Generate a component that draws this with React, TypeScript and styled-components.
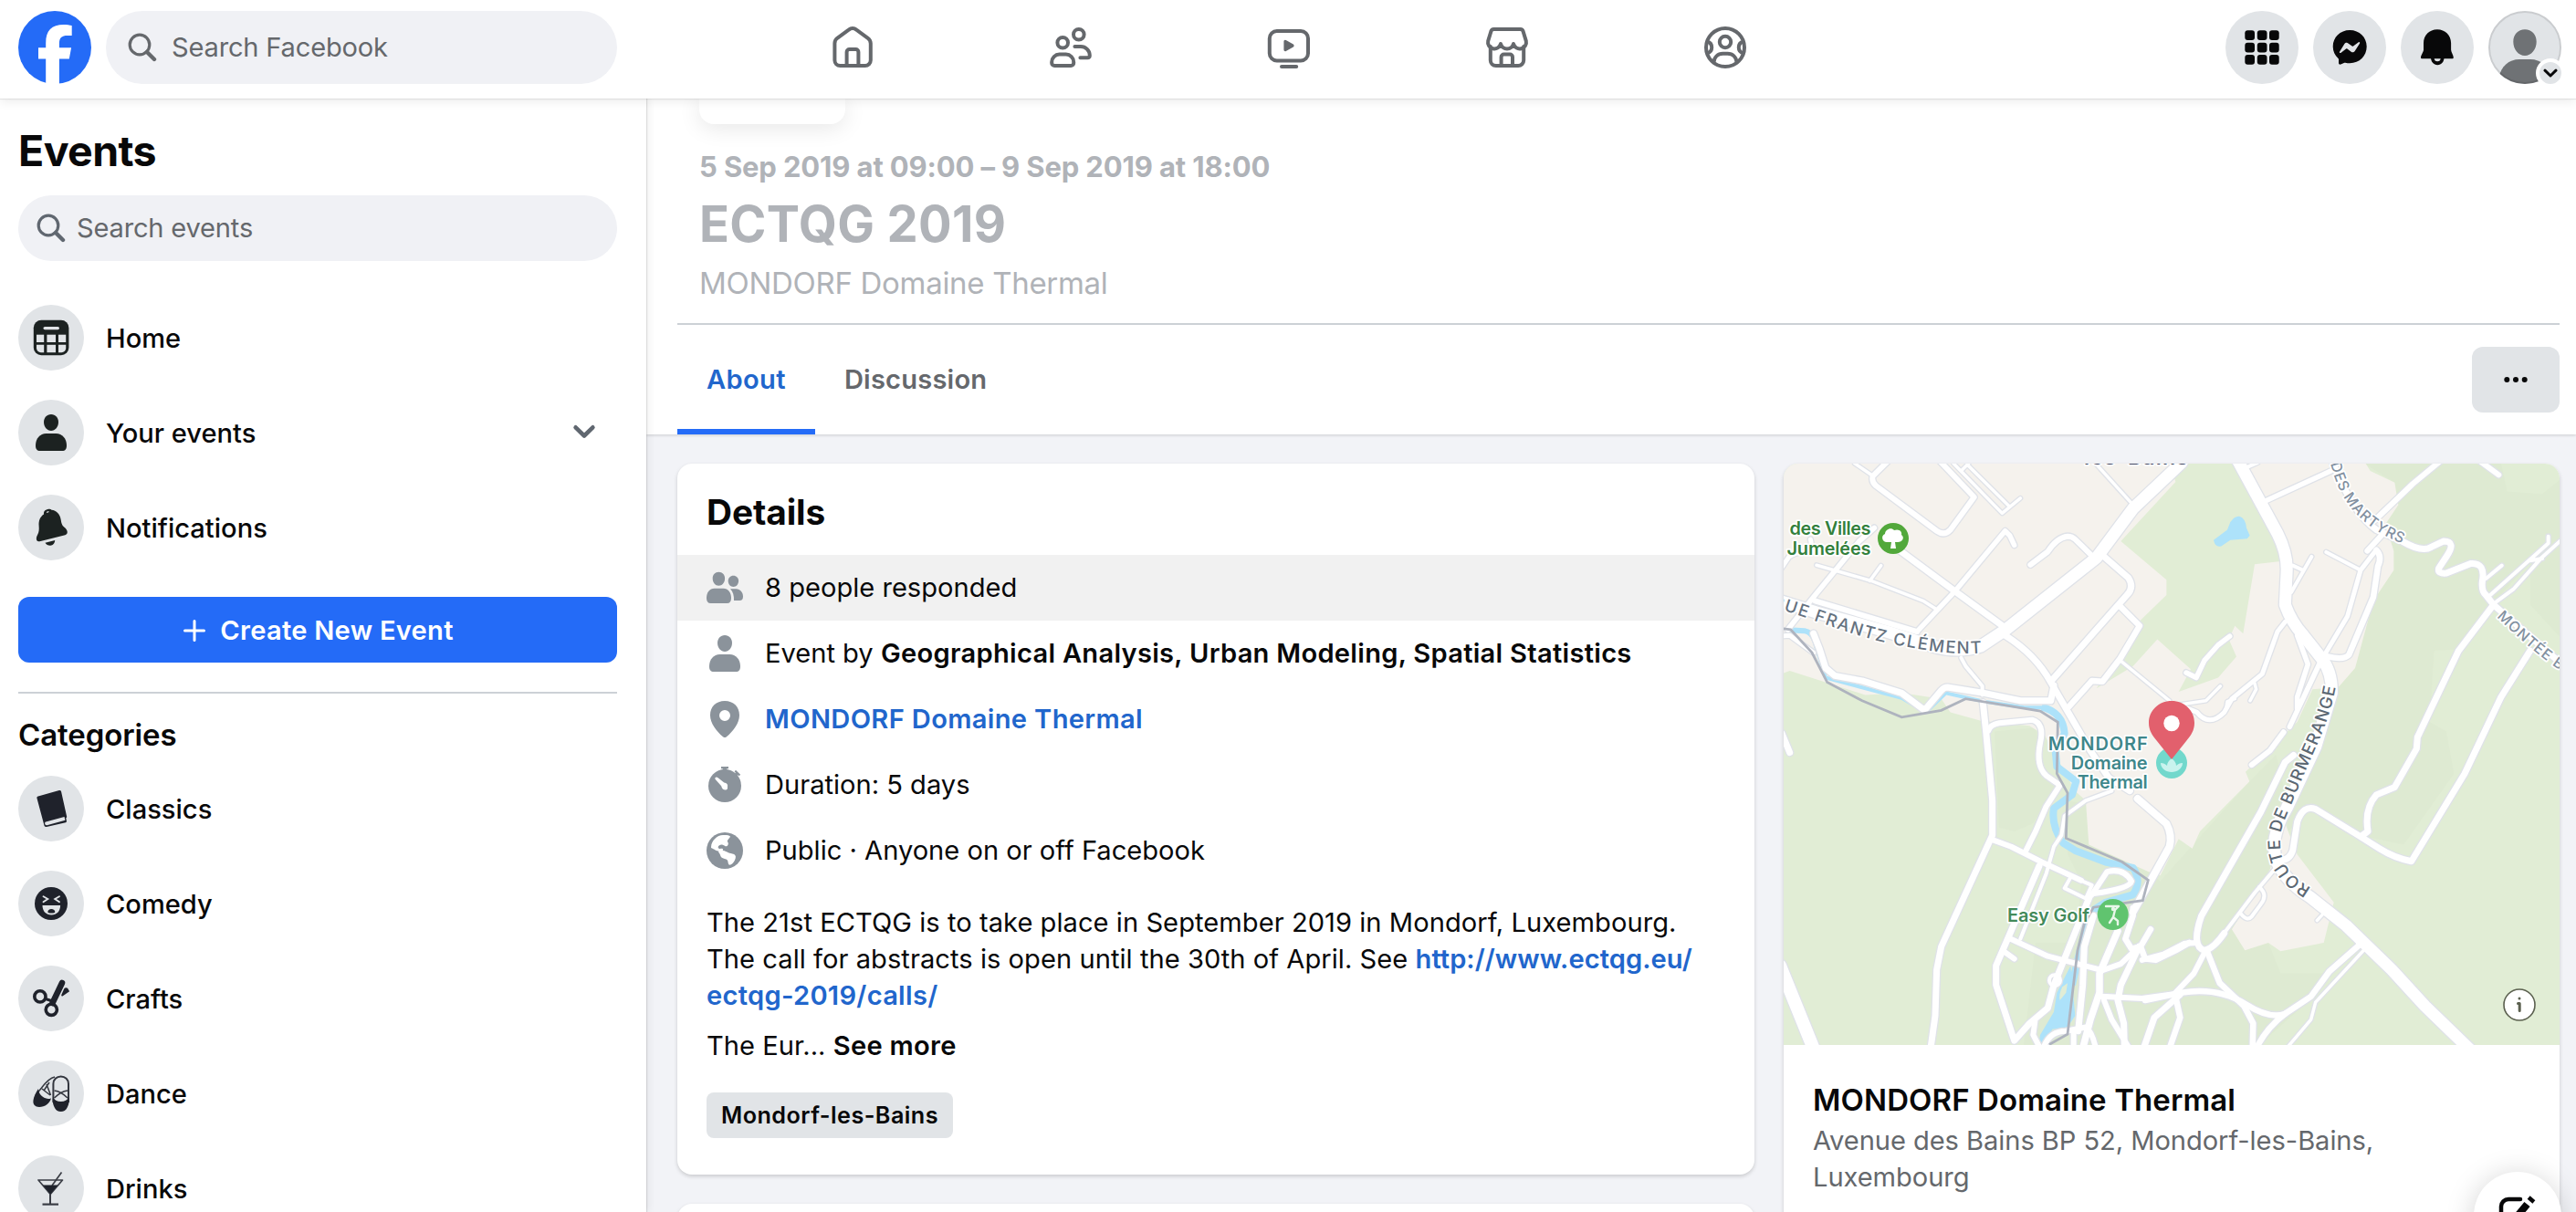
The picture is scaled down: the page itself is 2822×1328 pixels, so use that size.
import React from "react";
import styled, { createGlobalStyle } from "styled-components";

const color = {
  text: "#080809",
  muted: "#65686c",
  faded: "#b0b3b8",
  blue: "#246bf7",
  link: "#2166cc",
  chip: "#e1e4e7",
  field: "#f0f1f5",
  line: "#ccd1d6",
  canvas: "#f2f3f7",
  glyph: "#1c2221",
};

const GlobalStyle = createGlobalStyle`
  * { box-sizing: border-box; }
  body { margin: 0; background: ${color.canvas}; }
  h1, h2, h3, p { margin: 0; }
  svg { display: block; flex: none; }
  button { border: 0; padding: 0; font: inherit; color: inherit; background: none; }
`;

const Page = styled.div`
  position: relative;
  display: flex;
  flex-direction: column;
  width: 2822px;
  height: 1328px;
  overflow: hidden;
  font-family: Inter, "Liberation Sans", sans-serif;
  font-size: 29.1px;
  line-height: 40px;
  color: ${color.text};
`;

/* ---------- top bar ---------- */

const TopBar = styled.header`
  position: relative;
  z-index: 3;
  display: flex;
  align-items: center;
  flex: none;
  height: 108px;
  padding: 0 16px 8px 20px;
  background: #fff;
  box-shadow: 0 1px 1px rgba(0, 0, 0, 0.08), 0 4px 10px rgba(0, 0, 0, 0.07);
`;

const Brand = styled.div`
  display: flex;
  align-items: center;
  gap: 16px;
  width: 794px;
  padding-top: 4px;
`;

const SearchField = styled.div<{ $size: "large" | "small" }>`
  display: flex;
  align-items: center;
  flex: none;
  gap: ${(p) => (p.$size === "large" ? 16 : 12)}px;
  width: ${(p) => (p.$size === "large" ? "560px" : "100%")};
  height: ${(p) => (p.$size === "large" ? 80 : 72)}px;
  padding-left: ${(p) => (p.$size === "large" ? 24 : 20)}px;
  border-radius: 40px;
  background: ${color.field};
  color: ${color.muted};
  letter-spacing: -0.2px;
`;

const MainNav = styled.nav`
  display: grid;
  grid-template-columns: repeat(5, 239px);
  justify-items: center;
  padding-top: 4px;
  color: #65686c;
`;

const Actions = styled.div`
  display: flex;
  flex: 1;
  justify-content: flex-end;
  gap: 16px;
  padding-top: 4px;
`;

const ActionButton = styled.button`
  position: relative;
  width: 80px;
  height: 80px;
  border-radius: 50%;
  background: ${color.chip};
`;

const CaretBadge = styled.span`
  position: absolute;
  right: -4px;
  bottom: -4px;
  display: flex;
  align-items: center;
  justify-content: center;
  width: 32px;
  height: 32px;
  border: 4px solid #fff;
  border-radius: 50%;
  background: ${color.chip};
`;

/* ---------- sidebar ---------- */

const Body = styled.div`
  display: flex;
  flex: 1;
  min-height: 0;
`;

const Sidebar = styled.aside`
  position: relative;
  z-index: 2;
  flex: none;
  width: 708px;
  padding: 29px 32px 0 20px;
  background: #fff;
  box-shadow: 1px 0 1px rgba(0, 0, 0, 0.1), 3px 0 8px rgba(0, 0, 0, 0.06);
`;

const SidebarTitle = styled.h1`
  margin-bottom: 21px;
  font-size: 46.5px;
  line-height: 56px;
  font-weight: 700;
  letter-spacing: -0.6px;
`;

const NavList = styled.div<{ $top: number }>`
  display: flex;
  flex-direction: column;
  gap: 32px;
  margin-top: ${(p) => p.$top}px;
`;

const NavItem = styled.div`
  display: flex;
  align-items: center;
  gap: 24px;
  height: 72px;
  font-weight: 500;
`;

const NavIcon = styled.span`
  flex: none;
  width: 72px;
  height: 72px;
  border-radius: 50%;
  background: ${color.chip};
  color: ${color.glyph};
`;

const NavLabel = styled.span`
  flex: 1;
  padding-top: 2px;
`;

const Caret = styled.svg`
  margin-right: 20px;
`;

const CreateButton = styled.button`
  display: flex;
  align-items: center;
  justify-content: center;
  gap: 14px;
  width: 100%;
  height: 72px;
  margin-top: 40px;
  padding-top: 1px;
  border-radius: 12px;
  background: ${color.blue};
  color: #fff;
  font-weight: 600;
  letter-spacing: 0.27px;
`;

const SidebarRule = styled.hr`
  height: 2px;
  margin: 32px 0 25px;
  border: 0;
  background: ${color.line};
`;

const SidebarHeading = styled.h2`
  font-size: 33px;
  line-height: 40px;
  font-weight: 600;
  letter-spacing: -0.1px;
`;

/* ---------- event header ---------- */

const Main = styled.main`
  display: flex;
  flex-direction: column;
  flex: 1;
  min-width: 0;
`;

const EventHeader = styled.section`
  position: relative;
  z-index: 1;
  flex: none;
  height: 368px;
  padding: 0 18px 0 34px;
  background: #fff;
  box-shadow: 0 1px 3px rgba(0, 0, 0, 0.16);
`;

const Summary = styled.div`
  height: 248px;
  padding-left: 24px;
  border-bottom: 2px solid ${color.line};
  color: ${color.faded};
`;

const DateTile = styled.div`
  width: 160px;
  height: 28px;
  border-radius: 0 0 16px 16px;
  background: #fff;
  box-shadow: 0 4px 24px rgba(0, 0, 0, 0.1);
`;

const EventDate = styled.p`
  margin-top: 27px;
  font-size: 31px;
  font-weight: 700;
  letter-spacing: -0.14px;
`;

const EventName = styled.h2`
  margin-top: 10px;
  font-size: 54.3px;
  line-height: 64px;
  font-weight: 700;
  letter-spacing: 0.35px;
`;

const EventPlace = styled.p`
  margin-top: 13px;
  font-size: 33px;
  letter-spacing: -0.3px;
`;

const TabBar = styled.div`
  display: flex;
  align-items: center;
  height: 120px;
`;

const Tab = styled.button<{ $active?: boolean }>`
  height: 120px;
  padding: ${(p) => (p.$active ? "6px 32px 0" : "0 32px")};
  border-bottom: ${(p) => (p.$active ? `6px solid ${color.blue}` : "0")};
  color: ${(p) => (p.$active ? color.link : color.muted)};
  font-weight: 600;
  letter-spacing: ${(p) => (p.$active ? 0.35 : 0.2)}px;
`;

const MoreButton = styled.button`
  display: flex;
  align-items: center;
  justify-content: center;
  width: 96px;
  height: 72px;
  margin-left: auto;
  border-radius: 12px;
  background: ${color.chip};
`;

/* ---------- cards ---------- */

const Columns = styled.div`
  display: grid;
  grid-template-columns: 1180px 850px;
  gap: 32px;
  align-items: start;
  padding: 32px 18px 0 34px;
`;

const Stack = styled.div`
  display: flex;
  flex-direction: column;
  gap: 32px;
`;

const Card = styled.section`
  overflow: hidden;
  border-radius: 16px;
  background: #fff;
  box-shadow: 0 2px 4px rgba(0, 0, 0, 0.17);
`;

const DetailsCard = styled(Card)`
  height: 779px;
  padding-top: 29px;
`;

const NextCard = styled(Card)`
  height: 200px;
`;

const CardTitle = styled.h2`
  padding: 0 32px;
  margin-bottom: 23px;
  font-size: 38.8px;
  line-height: 48px;
  font-weight: 700;
  letter-spacing: -0.1px;
`;

const Fact = styled.div<{ $hovered?: boolean }>`
  display: flex;
  align-items: center;
  gap: 24px;
  height: 72px;
  padding: 0 32px;
  background: ${(p) => (p.$hovered ? "#f1f1f1" : "transparent")};
`;

const FactIcon = styled.svg`
  color: #8b939b;
`;

const Strong = styled.strong`
  font-weight: 600;
  letter-spacing: 0.28px;
`;

const Link = styled.a<{ $spacing?: number }>`
  color: ${color.link};
  font-weight: 600;
  letter-spacing: ${(p) => p.$spacing ?? 0}px;
`;

const Description = styled.div`
  padding: 23px 32px 0;
`;

const Paragraph = styled.p<{ $top?: number }>`
  margin-top: ${(p) => p.$top ?? 0}px;
  white-space: nowrap;
  letter-spacing: 0.045px;
`;

const Tag = styled.span`
  display: inline-flex;
  align-items: center;
  height: 50px;
  margin-top: 31px;
  padding: 0 16px;
  border-radius: 8px;
  background: ${color.chip};
  font-size: 25.2px;
  font-weight: 600;
  letter-spacing: 0.45px;
`;

const PlaceCard = styled(Card)`
  height: 860px;
`;

const PlaceText = styled.div`
  padding: 40px 32px 0;
`;

const PlaceName = styled.h3`
  font-size: 33px;
  line-height: 40px;
  font-weight: 600;
  letter-spacing: 0.1px;
`;

const PlaceAddress = styled.p`
  width: 640px;
  margin-top: 5px;
  color: ${color.muted};
  letter-spacing: -0.06px;
`;

const ComposeButton = styled.button`
  position: absolute;
  z-index: 4;
  right: 16px;
  bottom: -52px;
  display: flex;
  align-items: center;
  justify-content: center;
  width: 96px;
  height: 96px;
  border-radius: 50%;
  background: #fff;
  box-shadow: 0 4px 32px rgba(0, 0, 0, 0.18);
`;

/* ---------- icons ---------- */

const SearchIcon = ({ tone }: { tone: string }) => (
  <svg width="32" height="32" viewBox="0 0 32 32" fill="none" stroke={tone} strokeLinecap="round">
    <circle cx="13" cy="13" r="10.8" strokeWidth="3.2" />
    <path d="M21 21l8 8" strokeWidth="4.4" />
  </svg>
);

const Logo = () => (
  <svg width="80" height="80" viewBox="0 0 80 80">
    <circle cx="40" cy="40" r="40" fill={color.blue} />
    <path
      fill="#fff"
      d="M30.2 80V52.4h-8.2V40.2h8.2V35c0-13.8 6.2-20.1 19.7-20.1 2.6 0 7 .5 8.8 1v11.2c-1-.1-2.6-.2-4.7-.2-6.6 0-9.1 2.5-9.1 9v4.3h13.2l-2.300 12.200H44.900V80z"
    />
  </svg>
);

const NavGlyph = ({ children }: { children: React.ReactNode }) => (
  <svg width="48" height="48" viewBox="0 0 24 24" fill="none" stroke="currentColor" strokeWidth="2" strokeLinecap="round" strokeLinejoin="round">
    {children}
  </svg>
);

const HomeIcon = () => (
  <NavGlyph>
    <path d="M2.2 9.8a3.7 3.7 0 0 1 1.4-2.9L9.9 2.3a3.3 3.3 0 0 1 4.2 0l6.3 4.6a3.7 3.7 0 0 1 1.500 2.900V19a3 3 0 0 1-3 3H5.200a3 3 0 0 1-3-3z" />
    <path d="M8.8 22v-7.500a1.500 1.500 0 0 1 1.500-1.500h3.400a1.500 1.500 0 0 1 1.500 1.500V22" />
  </NavGlyph>
);

const FriendsIcon = () => (
  <NavGlyph>
    <circle cx="7.600" cy="9.400" r="2.900" />
    <circle cx="16.400" cy="4.900" r="2.900" />
    <path d="M5.800 15.800h3.600a4.200 4.200 0 0 1 4.200 4.200v.5a1.500 1.500 0 0 1-1.500 1.500h-9a1.500 1.500 0 0 1-1.500-1.500V20a4.200 4.200 0 0 1 4.200-4.200z" />
    <path d="M14.200 11.500h3.300a4.900 4.900 0 0 1 4.900 4.900c0 .7-.5 1.200-1.200 1.200h-4" />
  </NavGlyph>
);

const VideoIcon = () => (
  <NavGlyph>
    <rect x="1.400" y="3" width="21.100" height="16.200" rx="4" />
    <path d="M8 22.500h8.100" />
    <path d="M10 8.700v4.600l4-2.300z" fill="currentColor" strokeWidth="1.600" />
  </NavGlyph>
);

const MarketIcon = () => (
  <NavGlyph>
    <path d="M4.800 2h14.400a1.600 1.600 0 0 1 1.600 1.200l1.600 5.200a3.400 3.400 0 0 1-6.900 1.600 3.600 3.600 0 0 1-7 0 3.400 3.400 0 0 1-6.900-1.600l1.600-5.200A1.600 1.600 0 0 1 4.800 2z" />
    <path d="M2.900 11.500V19a3 3 0 0 0 3 3h12.200a3 3 0 0 0 3-3v-7.500" />
    <path d="M8.800 22v-4.700a1.500 1.500 0 0 1 1.500-1.500h3.200a1.500 1.500 0 0 1 1.500 1.500V22" />
  </NavGlyph>
);

const GroupsIcon = () => (
  <NavGlyph>
    <circle cx="12" cy="12" r="10.500" />
    <circle cx="12" cy="9" r="3.100" />
    <path d="M5.700 20.200c.3-3 2.200-4.800 5-4.800h2.600c2.800 0 4.700 1.800 5 4.800" />
    <path d="M2.200 8.900a3.200 3.200 0 0 1 0 6.200M21.800 8.900a3.200 3.200 0 0 0 0 6.200" />
  </NavGlyph>
);

const GridIcon = () => (
  <svg width="80" height="80" viewBox="0 0 80 80" fill={color.text}>
    {[21.3, 34.8, 48].map((y) => [21.3, 34.8, 48].map((x) => <rect key={`${x}-${y}`} x={x} y={y} width="10.700" height="10.700" rx="3" />))}
  </svg>
);

const MessengerIcon = () => (
  <svg width="80" height="80" viewBox="0 0 80 80">
    <path
      fill={color.text}
      d="M40.200 21c-10.600 0-18.500 7.800-18.500 18.100 0 5.300 2.200 9.800 5.800 13 .4.300.5.700.5 1.100v3.800c0 1.200 1.200 2 2.300 1.500l4-1.700c.3-.2.700-.2 1-.1 1.500.4 3.200.6 4.900.6 10.600 0 18.500-7.800 18.500-18.200C58.700 28.800 50.800 21 40.200 21z"
    />
    <path
      fill={color.chip}
      d="M29 44.700l5.400-8.600c.9-1.400 2.800-1.700 4-.7l4.300 3.200c.4.300.9.300 1.300 0l5.800-4.400c.8-.6 1.800.4 1.300 1.200l-5.400 8.600c-.9 1.400-2.800 1.700-4 .7L37.400 41.500c-.4-.3-.9-.3-1.300 0l-5.800 4.400c-.8.6-1.800-.4-1.300-1.200z"
    />
  </svg>
);

const BellIcon = () => (
  <svg width="80" height="80" viewBox="0 0 80 80">
    <path fill={color.text} d="M33 51h14.500c0 4.700-3 8.200-7.200 8.200S33 55.700 33 51z" />
    <path fill={color.chip} d="M36.700 52h7c0 2-1.500 3.300-3.500 3.300S36.700 54 36.700 52z" />
    <path
      fill={color.text}
      d="M40 20.300c-8.700 0-15 6.500-15 15v7.200c0 2.300-3 6.200-3 8.400 0 .8.600 1.300 1.400 1.300h33c.8 0 1.400-.5 1.400-1.300 0-2.200-2.700-6.100-2.700-8.400v-7.200c0-8.500-6.400-15-15.100-15z"
    />
  </svg>
);

const AvatarIcon = () => (
  <svg width="80" height="80" viewBox="0 0 80 80">
    <clipPath id="avatar-clip">
      <circle cx="40" cy="40" r="40" />
    </clipPath>
    <g clipPath="url(#avatar-clip)" fill="#6f7275">
      <path d="M40 20.300c7.500 0 12.700 5.500 12.700 13.400C52.700 42.200 47 49 40 49s-12.700-6.800-12.700-15.300c0-7.900 5.200-13.400 12.700-13.400z" />
      <path d="M12 72c1.500-11 10.500-19 22-19h12c11.500 0 20.500 8 22 19v10H12z" />
    </g>
    <circle cx="40" cy="40" r="39" fill="none" stroke="#000" strokeOpacity="0.100" strokeWidth="2" />
  </svg>
);

const CaretIcon = () => (
  <svg width="24" height="24" viewBox="0 0 24 24" fill="none" stroke={color.text} strokeWidth="3" strokeLinecap="round" strokeLinejoin="round">
    <path d="M6 9.200l6 5.800 6-5.800" />
  </svg>
);

const Glyph72 = ({ children }: { children: React.ReactNode }) => (
  <svg width="72" height="72" viewBox="0 0 72 72" fill="currentColor">
    {children}
  </svg>
);

const CalendarGlyph = () => (
  <Glyph72>
    <rect x="16.800" y="16.800" width="38.600" height="38.400" rx="8.500" />
    <g fill={color.chip}>
      <rect x="27.500" y="24" width="17.500" height="3.200" rx="1.600" />
      <rect x="20" y="32.700" width="8.200" height="8.300" />
      <rect x="31.400" y="32.700" width="9.600" height="8.300" />
      <rect x="44" y="32.700" width="8.200" height="8.300" />
      <path d="M20 43.800h8.200v8.400h-3.400a4.800 4.800 0 0 1-4.800-4.800z" />
      <rect x="31.400" y="43.800" width="9.600" height="8.400" />
      <path d="M44 43.800h8.200v3.600a4.800 4.800 0 0 1-4.800 4.800H44z" />
    </g>
  </Glyph72>
);

const PersonGlyph = () => (
  <Glyph72>
    <path d="M36 16c4.800 0 8 3.700 8 8.600C44 30 40.500 34 36 34s-8-4-8-9.400c0-4.900 3.200-8.600 8-8.600z" />
    <path d="M30.500 37h11C48 37 53 42.500 53 50c0 4-1.500 6-5 6H24c-3.500 0-5-2-5-6 0-7.500 5-13 11.500-13z" />
  </Glyph72>
);

const TiltedBellGlyph = () => (
  <Glyph72>
    <path d="M31.500 16.200c-2.800.6-4 2.900-3.500 5.400-4.200 2.700-5.800 7.400-5.400 12.500.3 4.300.2 7-1.500 10-1.600 2.600-1.500 5.400-.5 6.500.8.900 2.300.7 3.800.3l27-6.700c2-.5 2.500-1.900 2.300-3.600-.3-2.400-1.800-3.900-3.500-5.200-2.500-1.800-3-4.600-3.500-8-.9-6-5-10.400-10.200-10.700-.9-1.100-2.300-1.100-5-.5zm.8 2.100c.9-.2 1.600.2 1.700.8l-3 .8c-.1-.8.400-1.400 1.300-1.600z" />
    <path d="M29.500 52.800l10.700-2.700c-.2 3.200-2.200 5.600-5 5.700-2.400.1-4.600-1-5.700-3z" />
  </Glyph72>
);

const BookGlyph = () => (
  <Glyph72>
    <path d="M21.800 22.400l23-6.300c1.200-.3 2 .2 2.300 1.400l6 27c.2.900 0 1.500-.8 1.800l.6 3.200c.2.900-.1 1.400-1 1.700L31 55.900c-1.400.400-2.300-.2-2.600-1.600l-7.900-29.500c-.3-1.300.1-2.100 1.300-2.400z" fill="#1f222b" />
    <path d="M30.200 50.600l20.300-5.500.9 3.600-20 5.500c-2.200.4-3.200-3-1.200-3.600z" fill={color.chip} />
  </Glyph72>
);

const LaughGlyph = () => (
  <Glyph72>
    <circle cx="36" cy="36" r="18" fill="#1f222b" />
    <g fill="none" stroke={color.chip} strokeWidth="1.900" strokeLinecap="round">
      <path d="M27.500 28.200l4.800 2.800-4.800 3.200M45 28.200L40.200 31l4.800 3.200" />
    </g>
    <path d="M26.500 38h19.600c0 6.400-4 10.500-9.800 10.500S26.500 44.400 26.500 38z" fill={color.chip} />
    <path d="M36.300 42c2.300 0 4 1.400 4 3.300 0 .8-1.500 1.200-4 1.200s-4-.4-4-1.200c0-1.900 1.700-3.300 4-3.300z" fill="#1f222b" />
  </Glyph72>
);

const ScissorsGlyph = () => (
  <Glyph72>
    <g fill="none" stroke="#1f222b" strokeLinecap="round">
      <circle cx="23.900" cy="33.900" r="6.100" strokeWidth="3.600" />
      <circle cx="36.300" cy="48.300" r="6.100" strokeWidth="3.600" />
      <path d="M37.500 41L48 19" strokeWidth="6.500" />
      <path d="M30 36.500l6 2" strokeWidth="3" />
    </g>
    <path d="M47.500 31.500l2.800-6.300c.8-1.200 2.600-1.400 3.800-.4l2 3.400-7.600 5.200c-1.200.5-1.600-.6-1-1.900z" fill="#1f222b" />
  </Glyph72>
);

const BalletGlyph = () => (
  <Glyph72>
    <g fill="none" stroke="#33363e" strokeWidth="1.500">
      <path d="M40 18c-5 1-10 6-14.500 12L19 38M31 26l4.500 12M34 24l-6 9M26 31l9 7" />
      <path d="M38.400 46V25.500c0-4.500 3.500-8 8.300-8s8.300 3.500 8.300 8V46" strokeWidth="2" />
      <path d="M39.500 33c4 .5 10.500 4 14.500 8M54 33c-4 .5-10.500 4-14.500 8" />
    </g>
    <path d="M38 40c1.500 3.500 4.500 5 8.700 5s7.200-1.500 8.700-5c.8 5.500-.5 9.500-2 12-1.300 2.800-3.600 4-6.700 4s-5.400-1.200-6.700-4c-1.500-2.500-2.800-6.500-2-12z" fill="#1f222b" />
    <path d="M22 31c.5 5.500 4 10 11 11 1.200.2 2.500-.2 3-1-1 6-7 10-13 10-4.500 0-7.200-2.800-6.500-7.500.5-4 2.700-8 5.500-12.500z" fill="#1f222b" />
  </Glyph72>
);

const CocktailGlyph = () => (
  <Glyph72>
    <g fill="none" stroke="#3a3d45" strokeWidth="1.700" strokeLinejoin="round">
      <path d="M22 27h26.500L35.200 42.500z" />
      <path d="M35 41v12" strokeWidth="2" />
      <path d="M26.500 53.600h17.500" strokeWidth="2.200" />
      <path d="M47.500 18.500L37 33" />
    </g>
    <path d="M27 32.500h16.500l-8.300 10z" fill="#1f222b" />
  </Glyph72>
);

const PeopleFact = () => (
  <FactIcon width="40" height="40" viewBox="0 0 40 40" fill="currentColor">
    <path d="M13.400 2.700c4 0 6.700 3 6.700 7.100 0 4.500-3 8-6.700 8s-6.700-3.500-6.700-8c0-4.100 2.700-7.100 6.700-7.100z" />
    <path d="M8.500 20.700h10c5 0 8.500 4.500 8.500 10.500 0 3.800-1.500 5.800-4.500 5.800h-18c-3 0-4.500-2-4.500-5.800 0-6 3.500-10.500 8.500-10.500z" />
    <path d="M29.400 6.800c3.300 0 5.700 2.400 5.700 5.800 0 3.700-2.600 6.500-5.700 6.500s-5.700-2.800-5.700-6.500c0-3.400 2.400-5.800 5.700-5.800z" />
    <path d="M26 21.300h6.500c4.300 0 7.500 3.700 7.500 8.200 0 3-1.200 4.500-3.800 4.500H30c.3-5-1-9.800-4-12.700z" />
  </FactIcon>
);

const PersonFact = () => (
  <FactIcon width="40" height="40" viewBox="16 16 40 40" fill="currentColor">
    <path d="M36 16c4.800 0 8 3.700 8 8.600C44 30 40.500 34 36 34s-8-4-8-9.400c0-4.900 3.200-8.600 8-8.600z" />
    <path d="M30.500 37h11C48 37 53 42.500 53 50c0 4-1.500 6-5 6H24c-3.500 0-5-2-5-6 0-7.500 5-13 11.500-13z" />
  </FactIcon>
);

const PinFact = () => (
  <FactIcon width="40" height="40" viewBox="0 0 40 40" fill="currentColor">
    <path fillRule="evenodd" d="M20 0c9.500 0 16 6.300 16 15.700 0 8.800-7 17.600-14 23.600-1.200 1-2.800 1-4 0-7-6-14-14.800-14-23.600C4 6.300 10.500 0 20 0zm0 10a6 6 0 1 0 0 12 6 6 0 0 0 0-12z" />
  </FactIcon>
);

const StopwatchFact = () => (
  <FactIcon width="40" height="40" viewBox="0 0 40 40" fill="currentColor">
    <circle cx="20" cy="21" r="18" />
    <path d="M16 0h8v2.200h-1.700V4h-4.600V2.200H16zM32 3.800l5.200 4.900-1.500 1.600-1.200-1-1.700 1.600-2.500-2.600 1.600-1.600-1.300-1.200z" />
    <path d="M12.600 12.200l6.700 5.200c3 .4 4.300 2.300 3.700 4.900.2 1.900-.2 2.700-1.600 3.300-3 .2-4.600-1.500-5.200-4.300L9.700 14c-1.300-1.900 1-3.200 2.900-1.800z" fill="#fff" />
  </FactIcon>
);

const GlobeFact = () => (
  <FactIcon width="40" height="40" viewBox="0 0 40 40" fill="currentColor">
    <circle cx="20" cy="20" r="20" />
    <g fill="#fff">
      <path d="M5 16C5.500 9 11.500 3.300 18 3.100c3-.2 7 0 7.800 1.200.6 1.300-2.300 3-3 5.200.3 1.700 1.500 2 .8 3.900-.6 1.700-2 2.400-3.500 1.700-2-1.700-4.600-2-6-.8-1.600 1-2 2.600-.5 3.400 1.300.8 3-.5 4.300.600.700 1 0 1.700-1.200 2-2.700.7-5.500.3-7.500-1.100-2.500-1.800-4.500-1.400-4.200-3.200z" />
      <path d="M13.500 20.200c3-1.200 6.500-.4 9 1.400 2 1.500 3.300 1.500 5.800 1.800 3 .5 4.200 2.200 3.400 5-.8 3-2.900 6.200-5.400 7.200-1.600.6-2.500-.5-2.700-2.500-.2-2.500-1-3.700-3.800-4.200-3-.6-4.400-1.900-4.800-4.100-.2-1.900-3-3.300-1.500-4.600z" />
    </g>
  </FactIcon>
);

const ComposeIcon = () => (
  <svg width="48" height="48" viewBox="0 0 48 48" fill="none" stroke={color.text}>
    <path d="M27 6H14a8 8 0 0 0-8 8v20a8 8 0 0 0 8 8h20a8 8 0 0 0 8-8V23" strokeWidth="4.500" strokeLinecap="round" />
    <path d="M20 29l14.500-17.500" strokeWidth="8" />
    <path d="M37.500 8.300l3-3.500" strokeWidth="7.500" />
  </svg>
);

/* ---------- map ---------- */

type Road = [width: number, path: string];

const westRoads: Road[] = [
  [3.5, "M275 42L330 72"],
  [3.5, "M600 42L760 172L820 133M645 45L785 155M650 42L625 62"],
  [3.5, "M150 307L330 348L500 400L540 420M362 308L325 348"],
  [3.5, "M1070 45L1190 150"],
  [3.5, "M1148 555L1310 660"],
  [4, "M625 548L640 570L695 622L695 645"],
  [6, "M385 36L335 75Q330 90 345 100L545 218Q570 232 590 215L668 130L555 36"],
  [7, "M400 255L605 375L770 470"],
  [5.5, "M480 480L605 375L770 218L785 230L800 255"],
  [5.5, "M340 210L290 245L140 390L55 475"],
  [5, "M30 320L60 285Q90 270 110 275Q140 265 130 240"],
  [6, "M145 400L480 480"],
  [6, "M853 306L910 272Q940 235 975 232Q990 232 1000 240L1065 290"],
  [7, "M1095 285L1175 340Q1195 365 1170 385L920 610"],
  [6.5, "M1145 412L1212 465L1148 550L1090 610L1055 608L980 675"],
  [7, "M770 490Q870 540 920 612L1050 790L1110 860L1180 895"],
  [5, "M30 492L62 490L140 535"],
  [7, "M140 485L160 525L180 575L210 595L300 608L430 640L505 685L560 633Q570 625 580 625L700 640L820 660L920 660L930 620"],
  [7, "M697 665L707 740L728 920L728 1010L560 1300L545 1360L540 1480L525 1565"],
  [6, "M715 738Q720 722 750 718L860 710Q900 720 885 770Q870 830 905 855L950 880L905 935L870 1000L835 1055"],
  [4, "M1120 895L1035 920L965 960L955 1010L930 1040L905 1110L820 1280"],
  [6, "M728 1022L790 1040L890 1080L1020 1128"],
  [7, "M882 1090L740 1350L740 1400L800 1545L850 1500L910 1460L930 1400L1050 1165"],
  [4, "M915 1388a18 14 0 1 0 36 0a18 14 0 1 0 -36 0"],
  [4, "M985 1120L965 1148L1035 1175L1055 1140L1030 1132"],
  [6, "M1055 1165L1105 1105Q1160 1095 1185 1130Q1180 1150 1060 1162"],
  [6, "M788 1280L910 1325L1090 1362L1150 1345L1210 1300M770 1315L800 1332"],
  [6.5, "M1190 1200L1190 1220L1165 1280L1185 1306L1215 1300L1248 1255M1215 1300L1230 1332L1265 1335L1330 1310L1375 1290"],
  [7, "M1060 1220L1030 1300L1025 1400L1010 1520"],
  [7.5, "M1140 1260L1080 1370L1080 1420L1050 1490L1025 1565"],
  [7, "M1210 1300L1150 1400L1140 1440L1160 1500L1162 1565"],
  [6, "M1085 1430L1220 1435L1340 1422"],
  [6, "M1095 1440L1120 1490L1178 1565"],
  [7, "M1345 1425L1260 1485L1225 1565"],
  [6, "M895 1565Q915 1520 970 1520L1035 1510Q1055 1520 1068 1565M868 1495L862 1530L885 1565M995 1520L995 1565"],
  [8, "M1205 915L1300 980Q1320 1010 1310 1040L1240 1140L1190 1210"],
  [14, "M30 1350L145 1575"],
  [7, "M36 745L62 795"],
  [13, "M1350 40L1190 160L1070 288L770 476L690 518Q620 536 540 520L380 480L150 430L20 398"],
];

const eastRoads: Road[] = [
  [4, "M275 52L310 40"],
  [5.5, "M335 140L550 62"],
  [4, "M1070 388L1265 250V232M1095 402L1150 370L1240 290L1310 240M1205 295L1245 290M1060 342L1112 308"],
  [4, "M535 273L648 320M425 308L458 320M487 285L420 378"],
  [6, "M695 190L820 95L910 36M670 270L722 225"],
  [6, "M1040 36L1102 72"],
  [7, "M555 36Q620 170 700 215L785 245Q850 275 880 260L920 245Q965 245 930 285L905 315Q900 330 930 328L1010 303Q1060 300 1048 350Q1045 375 1060 385L1085 410L1310 565"],
  [7, "M1085 410L970 530L835 755L832 785L760 885L700 905Q660 940 672 1000L655 1010"],
  [7, "M1205 530L1110 650L990 850L815 1078Q760 1070 710 1045L640 1010L500 942Q460 930 440 975L425 1050Q415 1075 385 1075"],
  [6.5, "M700 268Q720 285 705 310L690 390L610 540Q595 555 540 545"],
  [5, "M695 272L648 320L605 440L530 540"],
  [5, "M400 455L375 480L325 590L225 655L200 690Q150 730 110 690L80 680"],
  [3.5, "M300 615L305 630L285 660M187 622L140 660L55 670M205 685L210 662L235 655"],
  [5.5, "M440 490L475 565L440 650L440 680M515 560L415 728"],
  [5.5, "M75 587L108 600L135 555L180 515L218 492"],
  [6, "M395 742L350 790L290 827"],
  [7, "M428 802L400 820L320 950L125 1220Q90 1300 135 1310Q165 1305 200 1265"],
  [4, "M190 1275L300 1160L380 1085M315 1145Q345 1165 320 1190L290 1222Q275 1235 255 1215"],
  [6, "M-70 1335L0 1320L70 1292L110 1290"],
  [6, "M138 1312L100 1370L40 1420"],
  [6.5, "M-60 1440L60 1420Q180 1405 270 1450Q350 1490 400 1475L485 1430L545 1365L655 1288"],
  [6.5, "M145 1315L185 1395L265 1455L295 1500L293 1565"],
  [6.5, "M40 1430L55 1485L20 1565"],
  [6.5, "M305 1565Q340 1510 400 1475"],
  [3.5, "M672 1298L500 1445L485 1490L410 1560M525 1215L505 1232"],
  [13, "M240 28L375 225Q410 280 405 330L400 410Q420 455 460 490L520 550Q555 585 553 640L500 780L405 940Q350 1010 370 1075Q400 1130 480 1170L600 1245L750 1360L860 1455L1010 1570"],
];

const RoadLayer = ({ roads, casing }: { roads: Road[]; casing?: boolean }) => (
  <g fill="none" stroke={casing ? "#dfe2e8" : "#fff"} strokeLinecap="round" strokeLinejoin="round">
    {roads.map(([width, d], i) => (
      <path key={i} d={d} strokeWidth={casing ? width + 2.6 : width} vectorEffect="non-scaling-stroke" />
    ))}
  </g>
);

const west = "translate(-14 -18) scale(.33333 .42088)";
const east = "translate(416 -18) scale(.33333 .42088)";

const VenueMap = () => (
  <svg width="850" height="637" viewBox="0 0 850 637">
    <defs>
      <path id="street-clement" d="M-13 157C30 169 80 191 125 199S190 210 222 207" />
      <path id="street-martyrs" d="M599 0C606 26 616 50 646 71C656 78 668 84 690 93" />
      <path id="street-montee" d="M781 168C800 186 816 201 837 217L870 240" />
      <path id="street-burmerange" d="M578 465C556 452 544 438 544 418C543 402 548 392 556 374L572 336C582 312 600 280 606 236" />
    </defs>
    <rect width="850" height="637" fill="#e1edd5" />
    <g transform={west} fill="#deead2">
      <path d="M735 740L870 730L900 850L940 880L860 980L800 1000L750 990z" />
      <path d="M980 920L1035 930L1045 1035L1240 1105L1280 1130L1573 870L1660 800L1690 900L1640 1100L1515 1255L1558 1310L1635 1290L1675 1370L1830 1370L1770 1440L1600 1560H830L870 1290L1000 1290L1020 1130L975 1060z" />
      <path d="M1950 42H2400L2420 115L2535 122L2600 80V500L2495 410V300L2370 410L2270 525L2180 530L2165 715L2220 740L2245 850L2080 1035L1930 1010L1770 940L1700 1000L1680 900L1865 625L1920 575L1980 400L2047 320V270L2020 200L2062 150L2050 92z" />
    </g>
    <g transform={west} fill="#f5f2ed">
      <path d="M36 36H1310L1330 90L1150 245L1300 345V385L1215 450L1140 545L1070 628L1190 570L1270 500L1380 578L1340 637L1470 600L1530 545L1505 500L1525 465L1552 485L1590 305L1675 297L1660 240L1515 36H1950L1970 62L2050 92L2062 150L2020 200L2047 270V320L1980 400L1920 575L1865 625L1780 630L1730 715L1560 845L1573 870L1410 1000L1385 1045L1340 1020L1280 1115L1240 1105L1045 1035L1035 920L1000 895L900 750L850 725L690 712L590 690L560 655L430 640L310 645L62 582L36 590z" />
      <path d="M1685 970L1730 1060L1850 1185L1817 1290L1675 1312L1635 1290L1558 1310L1515 1255L1640 1100z" />
    </g>
    <g transform={east}>
      <path d="M165 242L210 215L220 195Q235 178 250 180Q270 185 273 210L284 230L275 238L220 242L190 258Q170 262 165 242z" fill="#ade2fa" />
    </g>
    <g transform={west}>
      <g fill="none" stroke="#ade2fa" strokeLinejoin="round">
        <path d="M60 476L110 478Q135 482 145 505" strokeWidth="6" vectorEffect="non-scaling-stroke" />
        <path d="M140 500L180 600L430 653L510 690L575 640L700 662L830 677L900 678" strokeWidth="4" vectorEffect="non-scaling-stroke" />
        <path d="M890 676Q960 690 965 745L935 790L940 832L1003 870L990 905L930 940Q920 985 960 1030L1000 1050L1100 1080L1190 1095Q1220 1130 1190 1165L1100 1185L1050 1210L1010 1330L990 1400" strokeWidth="8" vectorEffect="non-scaling-stroke" />
      </g>
      <path d="M985 1350L1000 1480L975 1510L925 1515L900 1560H880L885 1530L930 1470L940 1420z" fill="#ade2fa" />
      <path d="M975 1395L970 1420L950 1440Q945 1425 958 1405z" fill="#e1edd5" />
      <RoadLayer roads={westRoads} casing />
    </g>
    <g transform={east}>
      <RoadLayer roads={eastRoads} casing />
      <RoadLayer roads={eastRoads} />
    </g>
    <g transform={west}>
      <RoadLayer roads={westRoads} />
      <path
        d="M36 472L65 475L135 535L185 612L300 660L430 703L560 685L640 655L885 687L943 716L940 850L975 900L970 1018L1155 1080L1240 1127L1222 1180L1060 1198L1030 1240L1008 1310L975 1528L915 1555"
        fill="none"
        stroke="#aeb3be"
        strokeWidth="2.800"
        vectorEffect="non-scaling-stroke"
      />
    </g>
    <g stroke="#fff" strokeWidth="3.500" strokeLinejoin="round" paintOrder="stroke" fontWeight="600" fontFamily="Inter, sans-serif">
      <text x="329" y="1" fontSize="23" textLength="114" fill="#474c66">les-Bains</text>
      <g fontSize="18.500" fill="#65727f" fontWeight="500">
        <text letterSpacing="1.600"><textPath href="#street-clement">RUE FRANTZ CLÉMENT</textPath></text>
        <text letterSpacing="1" fill="#5c6873"><textPath href="#street-burmerange">ROUTE DE BURMERANGE</textPath></text>
      </g>
      <g fontSize="16" fill="#8290a0" fontWeight="500">
        <text letterSpacing="0.800"><textPath href="#street-martyrs">DES MARTYRS</textPath></text>
        <text letterSpacing="1"><textPath href="#street-montee">MONTÉE BELLE</textPath></text>
      </g>
      <g fontSize="20" textAnchor="end" fill="#33803c">
        <text x="95.500" y="78" textLength="89">des Villes</text>
        <text x="95.500" y="99.500" textLength="92">Jumelées</text>
      </g>
      <g fontSize="20" textAnchor="end" fill="#3f878b">
        <text x="398.700" y="313.500" textLength="109">MONDORF</text>
        <text x="398.700" y="334.700" textLength="84">Domaine</text>
        <text x="398.700" y="355.800" textLength="77">Thermal</text>
      </g>
      <text x="335" y="501.500" fontSize="20" textAnchor="end" textLength="90" fill="#438a5a">Easy Golf</text>
    </g>
    <circle cx="120" cy="82" r="17" fill="#52a83b" />
    <path d="M113 86c-5 0-7-7-2-9 0-5 7-8 10-4 6-2 9 2 8 5 4 3 1 8-4 8h-3l1 7h-6l1-7z" fill="#fff" />
    <circle cx="360.700" cy="494" r="17" fill="#60c46f" />
    <g fill="none" stroke="#e9f7ea" strokeWidth="2.400" strokeLinecap="round" strokeLinejoin="round">
      <path d="M353 485h14l-4 4M363 489l-2 8-4 6M361 497l5 4v4" />
      <circle cx="361" cy="488" r="1" />
    </g>
    <circle cx="425" cy="328" r="17" fill="#72d8cc" />
    <path d="M425 338c-6 0-12-4-12-10 3 0 5 1 7 3 0-3 2-6 5-8 3 2 5 5 5 8 2-2 4-3 7-3 0 6-6 10-12 10z" fill="#c9f3ee" />
    <path d="M425 260c14 0 25 10.500 25 24 0 8-3.500 13.500-9 20l-16 20-16-20c-5.500-6.500-9-12-9-20 0-13.500 11-24 25-24z" fill="#e2606d" />
    <circle cx="425" cy="284.500" r="8.700" fill="#fff" />
    <circle cx="806" cy="593" r="17" fill="#fff" stroke="#5b604f" strokeWidth="1.600" />
    <g fill="none" stroke="#5b604f" strokeWidth="3" strokeLinecap="round" strokeLinejoin="round">
      <path d="M806 586v.1M804.500 591.500h1.700v8" />
    </g>
  </svg>
);

/* ---------- page ---------- */

const menu = [
  { label: "Home", icon: <CalendarGlyph /> },
  { label: "Your events", icon: <PersonGlyph />, expandable: true },
  { label: "Notifications", icon: <TiltedBellGlyph /> },
];

const categories = [
  { label: "Classics", icon: <BookGlyph /> },
  { label: "Comedy", icon: <LaughGlyph /> },
  { label: "Crafts", icon: <ScissorsGlyph /> },
  { label: "Dance", icon: <BalletGlyph /> },
  { label: "Drinks", icon: <CocktailGlyph /> },
];

export default function App() {
  return (
    <Page>
      <GlobalStyle />
      <TopBar>
        <Brand>
          <Logo />
          <SearchField $size="large">
            <SearchIcon tone="#65686c" />
            Search Facebook
          </SearchField>
        </Brand>
        <MainNav>
          <HomeIcon />
          <FriendsIcon />
          <VideoIcon />
          <MarketIcon />
          <GroupsIcon />
        </MainNav>
        <Actions>
          <ActionButton><GridIcon /></ActionButton>
          <ActionButton><MessengerIcon /></ActionButton>
          <ActionButton><BellIcon /></ActionButton>
          <ActionButton>
            <AvatarIcon />
            <CaretBadge><CaretIcon /></CaretBadge>
          </ActionButton>
        </Actions>
      </TopBar>
      <Body>
        <Sidebar>
          <SidebarTitle>Events</SidebarTitle>
          <SearchField $size="small">
            <SearchIcon tone="#606770" />
            Search events
          </SearchField>
          <NavList $top={48}>
            {menu.map((item) => (
              <NavItem key={item.label}>
                <NavIcon>{item.icon}</NavIcon>
                <NavLabel>{item.label}</NavLabel>
                {item.expandable && (
                  <Caret width="32" height="32" viewBox="0 0 32 32" fill="none" stroke="#606770" strokeWidth="4.600" strokeLinecap="round" strokeLinejoin="round">
                    <path d="M6.600 10.300l9.400 9.200 9.400-9.200" />
                  </Caret>
                )}
              </NavItem>
            ))}
          </NavList>
          <CreateButton>
            <svg width="28" height="28" viewBox="0 0 28 28" fill="none" stroke="#fff" strokeWidth="3" strokeLinecap="round">
              <path d="M14 3.500v21M3.500 14h21" />
            </svg>
            Create New Event
          </CreateButton>
          <SidebarRule />
          <SidebarHeading>Categories</SidebarHeading>
          <NavList $top={25}>
            {categories.map((item) => (
              <NavItem key={item.label}>
                <NavIcon>{item.icon}</NavIcon>
                <NavLabel>{item.label}</NavLabel>
              </NavItem>
            ))}
          </NavList>
        </Sidebar>
        <Main>
          <EventHeader>
            <Summary>
              <DateTile />
              <EventDate>5 Sep 2019 at 09:00 – 9 Sep 2019 at 18:00</EventDate>
              <EventName>ECTQG 2019</EventName>
              <EventPlace>MONDORF Domaine Thermal</EventPlace>
            </Summary>
            <TabBar>
              <Tab $active>About</Tab>
              <Tab>Discussion</Tab>
              <MoreButton>
                <svg width="40" height="40" viewBox="0 0 40 40" fill={color.text}>
                  <circle cx="10.300" cy="20" r="3" />
                  <circle cx="20" cy="20" r="3" />
                  <circle cx="29.700" cy="20" r="3" />
                </svg>
              </MoreButton>
            </TabBar>
          </EventHeader>
          <Columns>
            <Stack>
              <DetailsCard>
                <CardTitle>Details</CardTitle>
                <Fact $hovered><PeopleFact />8 people responded</Fact>
                <Fact>
                  <PersonFact />
                  <span>Event by <Strong>Geographical Analysis, Urban Modeling, Spatial Statistics</Strong></span>
                </Fact>
                <Fact><PinFact /><Link $spacing={0.34}>MONDORF Domaine Thermal</Link></Fact>
                <Fact><StopwatchFact />Duration: 5 days</Fact>
                <Fact><GlobeFact />Public · Anyone on or off Facebook</Fact>
                <Description>
                  <Paragraph>
                    The 21st ECTQG is to take place in September 2019 in Mondorf, Luxembourg.
                    <br />
                    The call for abstracts is open until the 30th of April. See <Link $spacing={0.05}>http://www.ectqg.eu/</Link>
                    <br />
                    <Link $spacing={0.28}>ectqg-2019/calls/</Link>
                  </Paragraph>
                  <Paragraph $top={15}>The Eur... <Strong>See more</Strong></Paragraph>
                  <Tag>Mondorf-les-Bains</Tag>
                </Description>
              </DetailsCard>
              <NextCard />
            </Stack>
            <PlaceCard>
              <VenueMap />
              <PlaceText>
                <PlaceName>MONDORF Domaine Thermal</PlaceName>
                <PlaceAddress>Avenue des Bains BP 52, Mondorf-les-Bains, Luxembourg</PlaceAddress>
              </PlaceText>
            </PlaceCard>
          </Columns>
        </Main>
      </Body>
      <ComposeButton><ComposeIcon /></ComposeButton>
    </Page>
  );
}
